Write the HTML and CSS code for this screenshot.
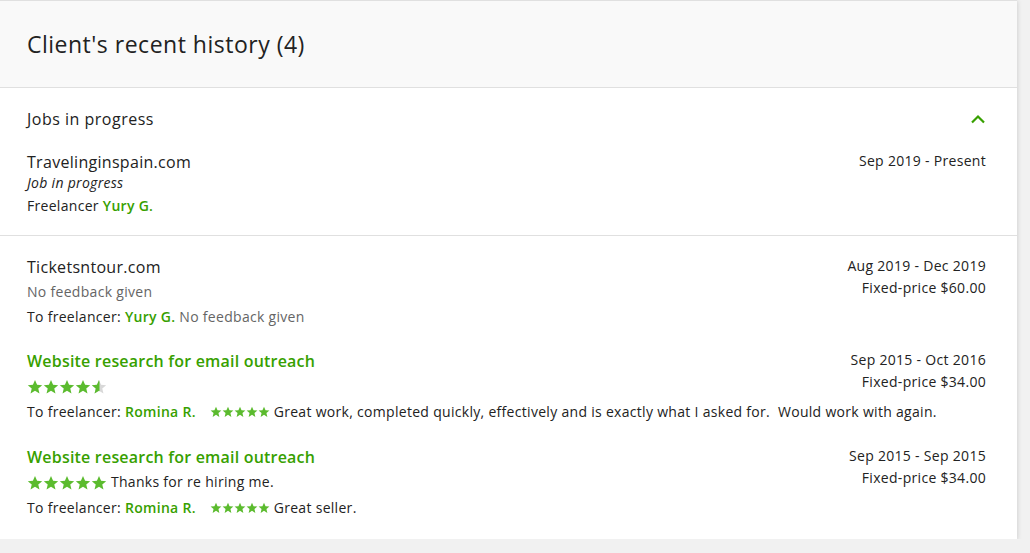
FILE: index.html
```html
<!DOCTYPE html>
<html>

<head>
  <meta charset="utf-8">
  <link rel="stylesheet" href="styles.css">
</head>

<body>
  <svg width="0" height="0" class="defs">
    <defs>
      <symbol id="star" viewBox="0 0 24 24">
        <polygon points="12,1.5 15.1,8.6 22.8,9.2 16.9,14.2 18.7,21.8 12,17.7 5.3,21.8 7.1,14.2 1.2,9.2 8.9,8.6" />
      </symbol>
      <clipPath id="half">
        <rect x="0" y="0" width="8.5" height="16" />
      </clipPath>
    </defs>
  </svg>

  <section class="card">
    <header class="card-head">
      <h2>Client's recent history (4)</h2>
    </header>

    <div class="group">
      <div class="group-head">
        <h3>Jobs in progress</h3>
        <svg class="chevron" width="16" height="10" viewBox="0 0 16 10">
          <polyline points="2,8.5 8,2.5 14,8.5" />
        </svg>
      </div>
      <div class="job current">
        <div class="job-side">
          <div>Sep 2019 - Present</div>
        </div>
        <div class="job-title">Travelinginspain.com</div>
        <div class="note"><em>Job in progress</em></div>
        <div class="line">Freelancer <a href="#">Yury G.</a></div>
      </div>
    </div>

    <div class="group history">
      <div class="job plain">
        <div class="job-side">
          <div>Aug 2019 - Dec 2019</div>
          <div>Fixed-price $60.00</div>
        </div>
        <div class="job-title">Ticketsntour.com</div>
        <div class="note muted">No feedback given</div>
        <div class="line">To freelancer: <a href="#">Yury G.</a> <span class="muted">No feedback given</span></div>
      </div>

      <div class="job">
        <div class="job-side">
          <div>Sep 2015 - Oct 2016</div>
          <div>Fixed-price $34.00</div>
        </div>
        <a href="#" class="job-title link">Website research for email outreach</a>
        <div class="note">
          <span class="stars big">
            <svg><use href="#star" /></svg><svg><use href="#star" /></svg><svg><use href="#star" /></svg><svg><use href="#star" /></svg><svg class="part"><use href="#star" class="empty" /><g clip-path="url(#half)"><use href="#star" /></g></svg>
          </span>
        </div>
        <div class="line">To freelancer: <a href="#">Romina R.</a>
          <span class="stars small">
            <svg><use href="#star" /></svg><svg><use href="#star" /></svg><svg><use href="#star" /></svg><svg><use href="#star" /></svg><svg><use href="#star" /></svg>
          </span> Great work, completed quickly, effectively and is exactly what I asked for.&nbsp; Would work with again.</div>
      </div>

      <div class="job">
        <div class="job-side">
          <div>Sep 2015 - Sep 2015</div>
          <div>Fixed-price $34.00</div>
        </div>
        <a href="#" class="job-title link">Website research for email outreach</a>
        <div class="note">
          <span class="stars big">
            <svg><use href="#star" /></svg><svg><use href="#star" /></svg><svg><use href="#star" /></svg><svg><use href="#star" /></svg><svg><use href="#star" /></svg>
          </span> Thanks for re hiring me.
        </div>
        <div class="line">To freelancer: <a href="#">Romina R.</a>
          <span class="stars small">
            <svg><use href="#star" /></svg><svg><use href="#star" /></svg><svg><use href="#star" /></svg><svg><use href="#star" /></svg><svg><use href="#star" /></svg>
          </span> Great seller.</div>
      </div>
    </div>
  </section>
</body>

</html>
```

FILE: styles.css
```css
body {
  margin: 0;
  background-color: #f1f1f1;
  font-family: "Open Sans", Lato, sans-serif;
  letter-spacing: 0.3px;
  color: #222;
}

.defs {
  position: absolute;
}

a {
  color: #37a000;
  text-decoration: none;
  font-weight: 600;
}

.card {
  width: 1017px;
  background-color: #fff;
  border-top: 1px solid #e0e0e0;
  box-shadow: 0 1px 5px rgba(0, 0, 0, 0.18);
}

.card-head {
  background-color: #f9f9f9;
  border-bottom: 1px solid #e0e0e0;
  height: 87px;
  display: flex;
  align-items: center;
  padding: 0 27px;
  box-sizing: border-box;
}

.card-head h2 {
  margin: 0;
  font-size: 23px;
  font-weight: 400;
  letter-spacing: 0.5px;
  color: #222;
}

/*********** groups ***********/

.group {
  padding: 20px 31px 17px 27px;
  border-bottom: 1px solid #e0e0e0;
}

.group.history {
  border-bottom: none;
  padding-top: 19px;
  padding-bottom: 18px;
}

.group-head {
  display: flex;
  justify-content: space-between;
  align-items: center;
  height: 22px;
  margin-bottom: 21px;
}

.group-head h3 {
  margin: 0;
  font-size: 16px;
  font-weight: 400;
  letter-spacing: 0.5px;
}

.chevron {
  fill: none;
  stroke: #37a000;
  stroke-width: 2.2;
}

.job {
  font-size: 14px;
  display: flow-root;
}

.job + .job {
  margin-top: 20px;
}

.job-title {
  display: block;
  font-size: 16px;
  line-height: 24px;
  font-weight: 400;
}

.job-title.link {
  color: #37a000;
  font-weight: 600;
  letter-spacing: 0.2px;
}

.note {
  line-height: 26px;
}

.line {
  line-height: 26px;
}

.plain .line {
  line-height: 24px;
}

.current .job-title {
  line-height: 22px;
}

.current .note {
  line-height: 20px;
}

.current .line {
  line-height: 25px;
}

.current .job-side {
  line-height: 20px;
}

.muted {
  color: #656565;
}

.job-side {
  float: right;
  text-align: right;
  line-height: 22px;
}

/*********** stars ***********/

.stars {
  display: inline-flex;
  vertical-align: middle;
  position: relative;
}

.stars svg {
  fill: #5bbb2e;
}

.stars.big svg {
  width: 16px;
  height: 16px;
}

.stars.small {
  margin-left: 10px;
  top: -1px;
}

.stars.small svg {
  width: 12px;
  height: 12px;
}

.stars .empty {
  fill: #d8d8d8;
}
```
